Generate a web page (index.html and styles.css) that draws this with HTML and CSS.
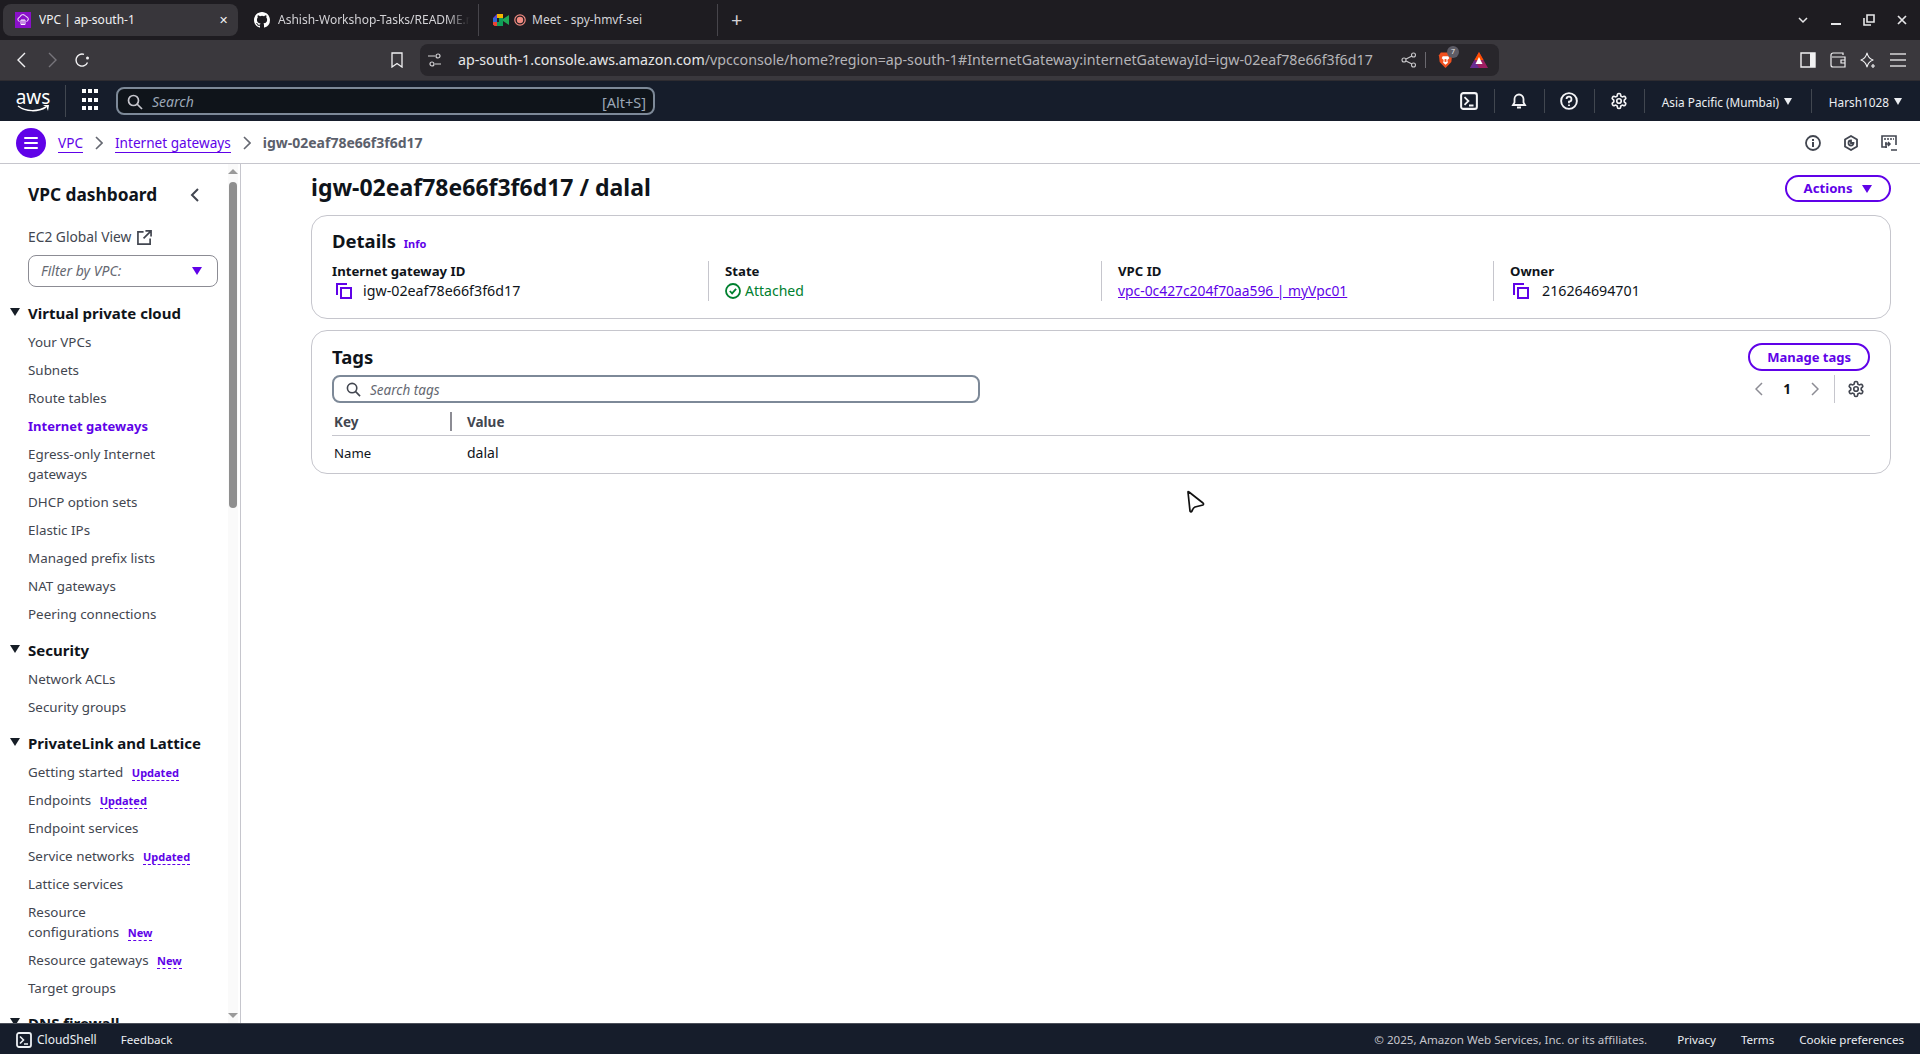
FILE: index.html
```html
<!DOCTYPE html>
<html lang="en">
<head>
    <meta charset="UTF-8">
    <meta name="viewport" content="width=device-width, initial-scale=1.0">
    <title>VPC | ap-south-1</title>
    <link rel="stylesheet" href="styles.css">
</head>
<body>
    <svg class="sprites" width="0" height="0">
        <symbol id="gear" viewBox="0 0 24 24"><path fill="none" stroke="currentColor" stroke-width="2.2" d="M12.22 2h-.44a2 2 0 0 0-2 2v.18a2 2 0 0 1-1 1.73l-.43.25a2 2 0 0 1-2 0l-.15-.08a2 2 0 0 0-2.73.73l-.22.38a2 2 0 0 0 .73 2.73l.15.1a2 2 0 0 1 1 1.72v.51a2 2 0 0 1-1 1.74l-.15.09a2 2 0 0 0-.73 2.73l.22.38a2 2 0 0 0 2.73.73l.15-.08a2 2 0 0 1 2 0l.43.25a2 2 0 0 1 1 1.73V20a2 2 0 0 0 2 2h.44a2 2 0 0 0 2-2v-.18a2 2 0 0 1 1-1.73l.43-.25a2 2 0 0 1 2 0l.15.08a2 2 0 0 0 2.73-.73l.22-.39a2 2 0 0 0-.73-2.73l-.15-.08a2 2 0 0 1-1-1.74v-.5a2 2 0 0 1 1-1.74l.15-.09a2 2 0 0 0 .73-2.73l-.22-.38a2 2 0 0 0-2.73-.73l-.15.08a2 2 0 0 1-2 0l-.43-.25a2 2 0 0 1-1-1.73V4a2 2 0 0 0-2-2z"/><circle cx="12" cy="12" r="3" fill="none" stroke="currentColor" stroke-width="2.2"/></symbol>
        <symbol id="copy" viewBox="0 0 16 16"><path fill="none" stroke="currentColor" stroke-width="2" d="M1 12V1h10M5 5h10v10H5z"/></symbol>
        <symbol id="terminal" viewBox="0 0 16 16"><rect x="1" y="1" width="14" height="14" rx="2" fill="none" stroke="currentColor" stroke-width="1.8"/><path fill="none" stroke="currentColor" stroke-width="1.6" d="M4 4.5 7.5 8 4 11.5M8 12h4"/></symbol>
        <symbol id="search" viewBox="0 0 16 16"><circle cx="6.5" cy="6.5" r="5" fill="none" stroke="currentColor" stroke-width="1.7"/><path stroke="currentColor" stroke-width="1.7" d="m10 10 5 5"/></symbol>
    </svg>

    <header class="browser-tabs">
        <div class="tab tab-active">
            <svg class="tab-icon" viewBox="0 0 16 16"><rect width="16" height="16" fill="#8a10c9"/><path fill="none" stroke="#fff" stroke-width="1" d="M4.5 9.5a2.2 2.2 0 0 1 .3-4.3 3.2 3.2 0 0 1 6.100-.6 2.500 2.500 0 0 1 .6 4.900M6 8h4v4.500H6zM8 8v4.500"/></svg>
            <span class="tab-title">VPC | ap-south-1</span>
            <span class="tab-close">&#10005;</span>
        </div>
        <div class="tab">
            <svg class="tab-icon" viewBox="0 0 16 16"><path fill="#fff" d="M8 0C3.580 0 0 3.580 0 8c0 3.540 2.290 6.530 5.470 7.590.4.070.55-.17.55-.38 0-.19-.01-.82-.01-1.490-2.010.37-2.530-.49-2.690-.94-.09-.23-.48-.94-.82-1.130-.28-.15-.68-.52-.01-.53.63-.01 1.080.58 1.230.82.720 1.210 1.870.87 2.330.66.070-.52.280-.87.510-1.070-1.780-.2-3.640-.89-3.640-3.950 0-.87.310-1.590.820-2.150-.08-.2-.36-1.020.08-2.120 0 0 .67-.21 2.200.82a7.420 7.420 0 0 1 4 0c1.530-1.040 2.200-.82 2.200-.82.440 1.100.160 1.920.080 2.120.51.560.82 1.270.82 2.150 0 3.070-1.870 3.750-3.650 3.950.29.250.54.730.54 1.480 0 1.070-.01 1.930-.01 2.200 0 .21.150.46.550.38A8.010 8.010 0 0 0 16 8c0-4.420-3.580-8-8-8z"/></svg>
            <span class="tab-title tab-fade">Ashish-Workshop-Tasks/README.md at main</span>
        </div>
        <div class="tab tab-meet">
            <svg class="tab-icon" viewBox="0 0 16 16"><path fill="#f4b400" d="M4 2h6v4H4z"/><path fill="#5a3fd6" d="M0 6 4 2v4H0z"/><path fill="#3367d6" d="M0 6h4v4H0z"/><path fill="#ea4335" d="M0 10h4v4H1.500L0 12.500z"/><path fill="#0f9d58" d="M4 10h6v4H4zM6 6h4v4H6z"/><path fill="#1faa54" d="m10 7 6-4v10l-6-4z"/></svg>
            <svg class="tab-rec" viewBox="0 0 12 12"><circle cx="6" cy="6" r="5.200" fill="none" stroke="#f28b82" stroke-width="1.200"/><circle cx="6" cy="6" r="3.200" fill="#f28b82"/></svg>
            <span class="tab-title">Meet - spy-hmvf-sei</span>
        </div>
        <div class="tab-new">+</div>
        <div class="window-controls">
            <svg viewBox="0 0 12 12"><path fill="none" stroke="#e6e6e8" stroke-width="1.500" d="m2 4 4 4 4-4"/></svg>
            <svg viewBox="0 0 12 12"><path stroke="#e6e6e8" stroke-width="2" d="M1 10h10"/></svg>
            <svg viewBox="0 0 12 12"><path fill="none" stroke="#e6e6e8" stroke-width="1.600" d="M4 1h7v7H4zM1 4v7h7"/></svg>
            <svg viewBox="0 0 12 12"><path stroke="#e6e6e8" stroke-width="1.700" d="m2 2 8 8M10 2l-8 8"/></svg>
        </div>
    </header>

    <div class="browser-toolbar">
        <div class="tb-btn"><svg viewBox="0 0 16 16"><path fill="none" stroke="#f1f1f3" stroke-width="1.400" d="M11 1 4 8l7 7"/></svg></div>
        <div class="tb-btn"><svg viewBox="0 0 16 16"><path fill="none" stroke="#77757b" stroke-width="1.400" d="m5 1 7 7-7 7"/></svg></div>
        <div class="tb-btn"><svg viewBox="0 0 16 16"><path fill="none" stroke="#f1f1f3" stroke-width="1.400" d="M13.500 10.500A6 6 0 1 1 10 2.400"/><circle cx="13.500" cy="6" r="1.500" fill="#f1f1f3"/></svg></div>
        <div class="tb-btn tb-bookmark"><svg viewBox="0 0 16 16"><path fill="none" stroke="#f1f1f3" stroke-width="1.300" d="M3 1h10v14l-5-3.500L3 15z"/></svg></div>
        <div class="url-box">
            <svg class="url-tune" viewBox="0 0 16 16"><g fill="none" stroke="#d4d3d6" stroke-width="1.200"><path d="M1 4h7M14 12H8"/><circle cx="11" cy="4" r="2"/><circle cx="5" cy="12" r="2"/></g></svg>
            <span class="url-text"><span class="url-host">ap-south-1.console.aws.amazon.com</span>/vpcconsole/home?region=ap-south-1#InternetGateway:internetGatewayId=igw-02eaf78e66f3f6d17</span>
            <svg class="url-share" viewBox="0 0 16 16"><g fill="none" stroke="#c8c7ca" stroke-width="1.100"><circle cx="3" cy="8" r="2"/><circle cx="12.500" cy="3" r="2"/><circle cx="12.500" cy="13" r="2"/><path d="m5 7 6-3M5 9l6 3"/></g></svg>
            <span class="url-sep"></span>
            <span class="brave-wrap">
                <svg class="brave" viewBox="0 0 16 18"><path fill="#f1501f" d="M3 1h10l2 3-.8 7L8 17.500 1.800 11 1 4z"/><path fill="#fff" d="M5 5h6l1 2-2 2 .5 3L8 14l-2.500-2L6 9 4 7z"/><path fill="#f1501f" d="M7 8h2v3H7z"/></svg>
                <span class="brave-badge">7</span>
            </span>
            <svg class="bat" viewBox="0 0 18 18"><path fill="#9e1f63" d="M9 1 0 17h18z"/><path fill="#ff5000" d="M9 1 4.500 9h9z"/><path fill="#662d91" d="m0 17 4.500-8 4.500 8z"/><path fill="#fff" d="m9 6-3.500 7h7z"/></svg>
        </div>
        <div class="tb-right">
            <div class="tb-btn"><svg viewBox="0 0 16 16"><path fill="none" stroke="#f1f1f3" stroke-width="1.400" d="M1 1h14v14H1z"/><path fill="#f1f1f3" d="M10 1h5v14h-5z"/></svg></div>
            <div class="tb-btn"><svg viewBox="0 0 16 16"><path fill="none" stroke="#f1f1f3" stroke-width="1.200" d="M13 3V1H3a2 2 0 0 0-2 2v10a2 2 0 0 0 2 2h12V5H2M15 8h-4v3h4"/></svg></div>
            <div class="tb-btn"><svg viewBox="0 0 16 16"><path fill="none" stroke="#f1f1f3" stroke-width="1.200" stroke-linejoin="round" d="M7 1Q8 6 13 8 8 10 7 15 6 10 1 8 6 6 7 1z"/><path stroke="#f1f1f3" stroke-width="1.200" d="M13 12v4M11 14h4"/></svg></div>
            <div class="tb-btn"><svg viewBox="0 0 16 16"><path stroke="#d6d5d8" stroke-width="1.500" d="M0 2h16M0 8h16M0 14h16"/></svg></div>
        </div>
    </div>

    <nav class="aws-nav">
        <div class="aws-logo">
            <span class="aws-word">aws</span>
            <svg class="aws-smile" viewBox="0 0 32 8"><path fill="none" stroke="#fff" stroke-width="1.500" d="M1 1c8 6 20 6 28 1"/><path fill="#fff" d="m26 0 6 0-1 6-1.500-4z"/></svg>
        </div>
        <div class="aws-apps">
            <span></span><span></span><span></span><span></span><span></span><span></span><span></span><span></span><span></span>
        </div>
        <div class="aws-search">
            <svg class="aws-search-icon"><use href="#search"/></svg>
            <span class="aws-search-text">Search</span>
            <span class="aws-search-key">[Alt+S]</span>
        </div>
        <div class="nav-item nav-first"><svg><use href="#terminal"/></svg></div>
        <div class="nav-item"><svg viewBox="0 0 16 18"><path fill="none" stroke="#f4f4f6" stroke-width="1.800" d="M2 13h12l-1.500-2.500V7a4.500 4.500 0 0 0-9 0v3.500zM6 15.500h4"/></svg></div>
        <div class="nav-item"><svg viewBox="0 0 16 16"><circle cx="8" cy="8" r="7" fill="none" stroke="#f4f4f6" stroke-width="1.700"/><path fill="none" stroke="#f4f4f6" stroke-width="1.600" d="M5.800 6.200A2.200 2.200 0 1 1 8 8.500V10M8 11v1.500"/></svg></div>
        <div class="nav-item"><svg><use href="#gear"/></svg></div>
        <div class="nav-menu nav-region">Asia Pacific (Mumbai) <span class="nav-caret"></span></div>
        <div class="nav-menu nav-user">Harsh1028 <span class="nav-caret"></span></div>
    </nav>

    <div class="crumbs">
        <button class="menu-btn" type="button"><span></span><span></span><span></span></button>
        <a class="crumb-link" href="#">VPC</a>
        <svg class="crumb-chevron" viewBox="0 0 8 14"><path fill="none" stroke="#656871" stroke-width="1.600" d="m1 1 6 6-6 6"/></svg>
        <a class="crumb-link" href="#">Internet gateways</a>
        <svg class="crumb-chevron" viewBox="0 0 8 14"><path fill="none" stroke="#656871" stroke-width="1.600" d="m1 1 6 6-6 6"/></svg>
        <span class="crumb-current">igw-02eaf78e66f3f6d17</span>
        <div class="crumb-tools">
            <svg viewBox="0 0 16 16"><circle cx="8" cy="8" r="7" fill="none" stroke="#424650" stroke-width="1.800"/><path stroke="#424650" stroke-width="2" d="M8 7v5M8 4v2"/></svg>
            <svg viewBox="0 0 16 16"><path fill="none" stroke="#424650" stroke-width="1.800" d="m8 1 6 3.500v7L8 15l-6-3.500v-7z"/><path fill="none" stroke="#424650" stroke-width="1.800" d="M10.500 8A2.500 2.500 0 1 1 8 5.500V8z"/></svg>
            <svg viewBox="0 0 16 16"><path fill="none" stroke="#424650" stroke-width="1.600" d="M6 12H1V1h14v9"/><path stroke="#424650" stroke-width="1.600" d="M3 4h2M6 4h2M9 4h2M12 4h1M10 15h6"/><path fill="none" stroke="#424650" stroke-width="1.500" d="M4 9h5M7 7l2 2-2 2M5 7v6"/></svg>
        </div>
    </div>

    <div class="layout">
        <aside class="sidebar">
            <div class="side-head">
                <h2>VPC dashboard</h2>
                <svg class="side-collapse" viewBox="0 0 10 14"><path fill="none" stroke="#424650" stroke-width="2" d="M8 1 2 7l6 6"/></svg>
            </div>
            <div class="global-view">EC2 Global View
                <svg viewBox="0 0 16 16"><path fill="none" stroke="#424650" stroke-width="1.800" d="M7 2H1v13h13V9M9 1h6v6M15 1 7 9"/></svg>
            </div>
            <div class="vpc-filter">
                <span>Filter by VPC:</span>
                <span class="vpc-filter-caret"></span>
            </div>

            <section class="side-group">
                <h3>Virtual private cloud</h3>
                <a href="#">Your VPCs</a>
                <a href="#">Subnets</a>
                <a href="#">Route tables</a>
                <a href="#" class="active">Internet gateways</a>
                <a href="#">Egress-only Internet<br>gateways</a>
                <a href="#">DHCP option sets</a>
                <a href="#">Elastic IPs</a>
                <a href="#">Managed prefix lists</a>
                <a href="#">NAT gateways</a>
                <a href="#">Peering connections</a>
            </section>
            <section class="side-group">
                <h3>Security</h3>
                <a href="#">Network ACLs</a>
                <a href="#">Security groups</a>
            </section>
            <section class="side-group">
                <h3>PrivateLink and Lattice</h3>
                <a href="#">Getting started <span class="flag">Updated</span></a>
                <a href="#">Endpoints <span class="flag">Updated</span></a>
                <a href="#">Endpoint services</a>
                <a href="#">Service networks <span class="flag">Updated</span></a>
                <a href="#">Lattice services</a>
                <a href="#">Resource<br>configurations <span class="flag">New</span></a>
                <a href="#">Resource gateways <span class="flag">New</span></a>
                <a href="#">Target groups</a>
            </section>
            <section class="side-group side-group-last">
                <h3>DNS firewall</h3>
            </section>

            <div class="side-scroll">
                <span class="scroll-up"></span>
                <span class="scroll-thumb"></span>
                <span class="scroll-down"></span>
            </div>
        </aside>

        <main class="content">
            <div class="page-head">
                <h1>igw-02eaf78e66f3f6d17 / dalal</h1>
                <button class="btn btn-actions" type="button">Actions <span class="btn-caret"></span></button>
            </div>

            <section class="card details">
                <h2>Details <a class="info" href="#">Info</a></h2>
                <div class="detail-grid">
                    <div class="detail-col">
                        <div class="detail-label">Internet gateway ID</div>
                        <div class="detail-value detail-id"><svg class="copy-icon"><use href="#copy"/></svg>igw-02eaf78e66f3f6d17</div>
                    </div>
                    <div class="detail-col">
                        <div class="detail-label">State</div>
                        <div class="detail-value state-ok">
                            <svg class="ok-icon" viewBox="0 0 16 16"><circle cx="8" cy="8" r="7" fill="none" stroke="#00802f" stroke-width="1.800"/><path fill="none" stroke="#00802f" stroke-width="1.800" d="m4.800 8 2.300 2.400 4-4.600"/></svg>
                            Attached
                        </div>
                    </div>
                    <div class="detail-col">
                        <div class="detail-label">VPC ID</div>
                        <div class="detail-value"><a class="detail-link" href="#">vpc-0c427c204f70aa596 | myVpc01</a></div>
                    </div>
                    <div class="detail-col">
                        <div class="detail-label">Owner</div>
                        <div class="detail-value detail-id detail-owner"><svg class="copy-icon"><use href="#copy"/></svg>216264694701</div>
                    </div>
                </div>
            </section>

            <section class="card tags">
                <div class="tags-head">
                    <h2>Tags</h2>
                    <button class="btn btn-manage" type="button">Manage tags</button>
                </div>
                <div class="tags-filter">
                    <div class="tags-search">
                        <svg><use href="#search"/></svg>
                        <span>Search tags</span>
                    </div>
                    <div class="pager">
                        <svg class="pager-arrow" viewBox="0 0 8 14"><path fill="none" stroke="#8c8c94" stroke-width="1.500" d="M7 1 1 7l6 6"/></svg>
                        <span class="pager-num">1</span>
                        <svg class="pager-arrow" viewBox="0 0 8 14"><path fill="none" stroke="#8c8c94" stroke-width="1.500" d="m1 1 6 6-6 6"/></svg>
                        <span class="pager-gear"><svg><use href="#gear"/></svg></span>
                    </div>
                </div>
                <div class="tag-row tag-row-head">
                    <div class="tag-key">Key</div>
                    <div class="tag-value">Value</div>
                </div>
                <div class="tag-row tag-row-body">
                    <div class="tag-key">Name</div>
                    <div class="tag-value">dalal</div>
                </div>
            </section>
        </main>
    </div>

    <footer class="footer">
        <div class="foot-shell"><svg><use href="#terminal"/></svg>CloudShell</div>
        <div class="foot-feedback">Feedback</div>
        <div class="foot-right">
            <span class="foot-copy">&copy; 2025, Amazon Web Services, Inc. or its affiliates.</span>
            <span class="foot-link">Privacy</span>
            <span class="foot-link">Terms</span>
            <span class="foot-link">Cookie preferences</span>
        </div>
    </footer>

    <svg class="cursor" viewBox="0 0 22 26"><path fill="#fff" stroke="#111" stroke-width="1.700" stroke-linejoin="round" d="M4 4Q4 3 5 4L19 15Q20 16 19 17L11 19Q9 20 8 23 7 25 6 23z"/></svg>
</body>
</html>
```

FILE: styles.css
```css
/* page */
* {
    box-sizing: border-box;
}

html, body {
    height: 100%;
}

body {
    margin: 0;
    display: flex;
    flex-direction: column;
    height: 1054px;
    overflow: hidden;
    position: relative;
    font-family: "Noto Sans", sans-serif;
    font-size: 14px;
    line-height: 20px;
    color: #0f141a;
    background-color: #fff;
}

h1, h2, h3 {
    margin: 0;
}

a {
    text-decoration: none;
}

.sprites {
    position: absolute;
}

/* browser tabs */
.browser-tabs {
    display: flex;
    flex: 0 0 40px;
    align-items: center;
    padding-left: 3px;
    background-color: #1e1c21;
    color: #d3d2d6;
    font-size: 12px;
}

.tab {
    display: flex;
    align-items: center;
    width: 241px;
    height: 32px;
    padding-left: 16px;
    border-right: 1px solid #47454b;
}

.tab-active {
    width: 235px;
    padding-left: 12px;
    padding-right: 10px;
    background-color: #38363b;
    border-right: none;
    border-radius: 8px;
    color: #f1f1f3;
}

.tab-meet {
    width: 239px;
    padding-left: 14px;
}

.tab-icon {
    flex: none;
    width: 16px;
    height: 16px;
    margin-right: 8px;
}

.tab-meet .tab-icon {
    margin-right: 5px;
}

.tab-rec {
    width: 12px;
    height: 12px;
    margin-right: 6px;
}

.tab-title {
    white-space: nowrap;
    overflow: hidden;
    flex: 1;
}

.tab-fade {
    margin-right: 8px;
    -webkit-mask-image: linear-gradient(to right, #000 88%, transparent);
    mask-image: linear-gradient(to right, #000 88%, transparent);
}

.tab-close {
    font-size: 11px;
    color: #f1f1f3;
}

.tab-new {
    margin-left: 13px;
    font-size: 20px;
    color: #d3d2d6;
}

.window-controls {
    display: flex;
    gap: 21px;
    margin-left: auto;
    padding-right: 12px;
}

.window-controls svg {
    width: 12px;
    height: 12px;
}

/* browser toolbar */
.browser-toolbar {
    display: flex;
    flex: 0 0 41px;
    align-items: center;
    padding: 0 7px;
    background-color: #3a383d;
    border-bottom: 1px solid #2e2c31;
}

.tb-btn {
    display: flex;
    justify-content: center;
    align-items: center;
    width: 30px;
    height: 30px;
}

.tb-btn svg {
    width: 16px;
    height: 16px;
}

.tb-bookmark {
    margin-left: 285px;
}

.url-box {
    display: flex;
    align-items: center;
    width: 1079px;
    height: 32px;
    margin-left: 8px;
    padding: 0 11px 0 7px;
    background-color: #28262b;
    border-radius: 8px;
    color: #b5b4b8;
}

.url-tune {
    width: 16px;
    height: 16px;
}

.url-text {
    margin-left: 15px;
    font-size: 14.230px;
    white-space: nowrap;
}

.url-host {
    color: #e6e6e8;
}

.url-share {
    width: 16px;
    height: 16px;
    margin-left: auto;
}

.url-sep {
    width: 1px;
    height: 16px;
    margin: 0 12px 0 8px;
    background-color: #6b696f;
}

.brave-wrap {
    position: relative;
    display: flex;
}

.brave {
    width: 15px;
    height: 18px;
}

.brave-badge {
    position: absolute;
    top: -5px;
    left: 9px;
    width: 12px;
    height: 12px;
    border-radius: 50%;
    background-color: #5d5c66;
    color: #eee;
    font-size: 7px;
    line-height: 12px;
    text-align: center;
}

.bat {
    width: 18px;
    height: 18px;
    margin-left: 17px;
}

.tb-right {
    display: flex;
    margin-left: auto;
}

/* aws top bar */
.aws-nav {
    display: flex;
    flex: 0 0 40px;
    align-items: center;
    padding: 0 18px 0 17px;
    background-color: #161d2b;
    color: #eceff3;
    font-size: 11.800px;
}

.aws-logo {
    display: flex;
    flex-direction: column;
    align-items: center;
    width: 32px;
    height: 24px;
}

.aws-word {
    font-size: 19px;
    line-height: 16px;
    color: #fff;
}

.aws-smile {
    width: 32px;
    height: 8px;
}

.aws-apps {
    display: grid;
    grid-template-columns: repeat(3, 4px);
    gap: 2px;
    height: 24px;
    margin-left: 16px;
    padding: 4px 0 4px 16px;
    width: 35px;
    box-sizing: content-box;
    border-left: 1px solid #414750;
}

.aws-apps span {
    height: 4px;
    background-color: #fff;
}

.aws-search {
    display: flex;
    align-items: center;
    width: 539px;
    height: 28px;
    margin-left: -1px;
    padding: 1px 7px 0 9px;
    background-color: #0f141a;
    border: 2px solid #7d8998;
    border-radius: 8px;
    color: #9ba7b6;
    font-size: 14px;
}

.aws-search-icon {
    width: 16px;
    height: 16px;
    color: #c6c6cd;
}

.aws-search-text {
    margin-left: 9px;
    font-style: italic;
}

.aws-search-key {
    margin-left: auto;
    font-size: 14.500px;
}

.nav-item {
    display: flex;
    justify-content: center;
    align-items: center;
    width: 50px;
    height: 24px;
    border-left: 1px solid #414750;
    color: #f4f4f6;
}

.nav-first {
    margin-left: auto;
    border-left: none;
}

.nav-item svg {
    width: 18px;
    height: 18px;
}

.nav-menu {
    display: flex;
    align-items: center;
    height: 24px;
    padding-top: 1px;
    border-left: 1px solid #414750;
    white-space: nowrap;
}

.nav-region {
    width: 167px;
    padding-left: 17px;
}

.nav-user {
    padding-left: 17px;
}

.nav-caret {
    width: 0;
    height: 0;
    margin-left: 5px;
    border-left: 4px solid transparent;
    border-right: 4px solid transparent;
    border-top: 7px solid #eceff3;
}

/* breadcrumbs */
.crumbs {
    display: flex;
    flex: 0 0 43px;
    align-items: center;
    padding: 1px 23px 0 16px;
    background-color: #fff;
    border-bottom: 1px solid #c6c6cd;
}

.menu-btn {
    display: flex;
    flex-direction: column;
    justify-content: center;
    gap: 3px;
    width: 30px;
    height: 30px;
    padding: 0 8px;
    border: none;
    border-radius: 50%;
    background-color: #6002e8;
}

.menu-btn span {
    height: 2px;
    background-color: #fff;
    border-radius: 1px;
}

.crumb-link {
    margin-left: 12px;
    padding-top: 1px;
    font-size: 13.600px;
    color: #6002e8;
    border-bottom: 1px solid #6002e8;
    line-height: 18px;
}

.crumb-chevron {
    width: 8px;
    height: 14px;
    margin-left: 12px;
    margin-right: -1px;
}

.crumb-chevron + .crumb-link {
    margin-left: 13px;
}

.crumb-current {
    margin-left: 13px;
    color: #5b606b;
    font-weight: 700;
}

.crumb-tools {
    display: flex;
    gap: 22px;
    margin-left: auto;
}

.crumb-tools svg {
    width: 16px;
    height: 16px;
}

/* main area */
.layout {
    display: flex;
    flex: 1;
    min-height: 0;
}

.sidebar {
    position: relative;
    flex: 0 0 241px;
    padding: 18px 0 0 28px;
    overflow: hidden;
    border-right: 1px solid #c6c6cd;
}

.side-head {
    display: flex;
    align-items: center;
    justify-content: space-between;
    width: 172px;
}

.side-head h2 {
    font-size: 17.300px;
    line-height: 26px;
    font-weight: 700;
}

.side-collapse {
    width: 10px;
    height: 14px;
}

.global-view {
    display: flex;
    align-items: center;
    gap: 6px;
    margin-top: 19px;
    font-size: 13.800px;
    color: #424650;
}

.global-view svg {
    width: 15px;
    height: 15px;
}

.vpc-filter {
    display: flex;
    align-items: center;
    justify-content: space-between;
    width: 190px;
    height: 32px;
    margin-top: 8px;
    padding: 0 15px 0 12px;
    border: 1px solid #8c8c94;
    border-radius: 8px;
    color: #656871;
    font-style: italic;
}

.vpc-filter-caret {
    width: 0;
    height: 0;
    border-left: 5px solid transparent;
    border-right: 5px solid transparent;
    border-top: 8px solid #6002e8;
}

.side-group {
    margin-top: 14px;
}

.side-group-last {
    margin-top: 13px;
}

.side-group h3 {
    position: relative;
    margin-bottom: 7px;
    font-size: 15px;
    line-height: 24px;
    font-weight: 700;
}

.side-group h3::before {
    content: "";
    position: absolute;
    left: -18px;
    top: 7px;
    border-left: 5px solid transparent;
    border-right: 5px solid transparent;
    border-top: 8px solid #161d26;
}

.side-group a {
    display: block;
    margin-bottom: 8px;
    font-size: 13.400px;
    color: #424650;
}

.side-group a.active {
    color: #6002e8;
    font-size: 13px;
    font-weight: 700;
}

.flag {
    margin-left: 5px;
    color: #6002e8;
    font-size: 11px;
    line-height: 1;
    font-weight: 700;
    border-bottom: 1px dashed #6002e8;
}

.side-scroll {
    position: absolute;
    top: 0;
    right: 2px;
    bottom: 0;
    width: 10px;
    background-color: #fafafa;
}

.scroll-up, .scroll-down {
    position: absolute;
    left: 0;
    border-left: 5px solid transparent;
    border-right: 5px solid transparent;
}

.scroll-up {
    top: 5px;
    border-bottom: 5px solid #9a9a9a;
}

.scroll-down {
    bottom: 5px;
    border-top: 5px solid #9a9a9a;
}

.scroll-thumb {
    position: absolute;
    top: 18px;
    left: 1px;
    width: 8px;
    height: 326px;
    border-radius: 4px;
    background-color: #8f8f8f;
}

.content {
    flex: 1;
    padding: 8px 29px 0 70px;
}

.page-head {
    display: flex;
    align-items: center;
    justify-content: space-between;
    margin-bottom: 11px;
}

.page-head h1 {
    padding-bottom: 2px;
    font-size: 23px;
    line-height: 30px;
    font-weight: 700;
}

.btn {
    height: 27px;
    padding: 0 17px;
    border: 2px solid #6002e8;
    border-radius: 14px;
    background-color: #fff;
    color: #6002e8;
    font-family: inherit;
    font-size: 13.200px;
    font-weight: 700;
    line-height: 20px;
}

.btn-manage {
    height: 28px;
    font-size: 13px;
}

.btn-caret {
    display: inline-block;
    margin-left: 6px;
    border-left: 5px solid transparent;
    border-right: 5px solid transparent;
    border-top: 8px solid #6002e8;
}

.card {
    margin-bottom: 11px;
    border: 1px solid #c6c6cd;
    border-radius: 16px;
    background-color: #fff;
}

.card h2 {
    font-size: 18.500px;
    line-height: 26px;
    font-weight: 700;
}

.details {
    height: 104px;
    padding: 12px 20px 0;
}

.info {
    margin-left: 3px;
    color: #6002e8;
    font-size: 11px;
    line-height: 1;
    font-weight: 700;
}

.detail-grid {
    display: grid;
    grid-template-columns: 376px 393px 392px 1fr;
    margin-top: 7px;
}

.detail-col + .detail-col {
    padding-left: 16px;
    border-left: 1px solid #c6c6cd;
}

.detail-label {
    font-weight: 700;
    font-size: 13.200px;
}

.detail-value {
    display: flex;
    align-items: center;
    color: #0f141a;
}

.detail-id {
    font-size: 14.250px;
}

.copy-icon {
    width: 16px;
    height: 16px;
    margin: 0 11px 0 4px;
    color: #6002e8;
}

.detail-owner .copy-icon {
    margin-left: 3px;
    margin-right: 13px;
}

.detail-value.state-ok {
    color: #00802f;
}

.ok-icon {
    width: 16px;
    height: 16px;
    margin-right: 4px;
}

.detail-link {
    font-size: 13.850px;
    color: #6002e8;
    text-decoration: underline;
}

.tags {
    height: 144px;
    padding: 12px 20px 0;
}

.tags-head {
    display: flex;
    align-items: center;
    justify-content: space-between;
}

.tags-filter {
    display: flex;
    align-items: center;
    justify-content: space-between;
    margin-top: 4px;
}

.tags-search {
    display: flex;
    align-items: center;
    width: 648px;
    height: 28px;
    padding: 1px 0 0 12px;
    border: 2px solid #7d8998;
    border-radius: 8px;
    color: #656871;
    font-size: 13.500px;
    font-style: italic;
}

.tags-search svg {
    width: 15px;
    height: 15px;
    margin-right: 9px;
    color: #424650;
}

.pager {
    display: flex;
    align-items: center;
}

.pager-arrow {
    width: 8px;
    height: 14px;
}

.pager-num {
    width: 48px;
    text-align: center;
    font-weight: 700;
    font-size: 13.500px;
}

.pager-gear {
    display: flex;
    align-items: center;
    justify-content: center;
    width: 36px;
    height: 28px;
    margin-left: 15px;
    border-left: 1px solid #c6c6cd;
    color: #424650;
}

.pager-gear svg {
    width: 18px;
    height: 18px;
    margin-left: 7px;
}

.tag-row {
    display: grid;
    grid-template-columns: 120px 1fr;
}

.tag-row-head {
    height: 33px;
    padding-top: 9px;
    border-bottom: 1px solid #c6c6cd;
    font-weight: 700;
    font-size: 13.500px;
    color: #424650;
}

.tag-row-body {
    padding-top: 7px;
}

.tag-row-body .tag-key {
    font-size: 13.200px;
}

.tag-key {
    padding-left: 2px;
}

.tag-row-head .tag-key {
    height: 19px;
    border-right: 2px solid #8c8c94;
}

.tag-value {
    padding-left: 15px;
}

/* footer */
.footer {
    display: flex;
    flex: 0 0 31px;
    align-items: center;
    padding: 1px 16px 0;
    background-color: #161d2b;
    border-top: 1px solid #4b4f59;
    color: #eceff3;
    font-size: 11.600px;
}

.foot-shell {
    display: flex;
    align-items: center;
    gap: 5px;
    font-size: 12px;
}

.foot-shell svg {
    width: 16px;
    height: 16px;
}

.foot-feedback {
    margin-left: 24px;
}

.foot-right {
    display: flex;
    gap: 25px;
    margin-left: auto;
}

.foot-copy {
    color: #c6c6cd;
    margin-right: 5px;
}

/* mouse pointer in the shot */
.cursor {
    position: absolute;
    left: 1184px;
    top: 488px;
    width: 22px;
    height: 26px;
}
```
